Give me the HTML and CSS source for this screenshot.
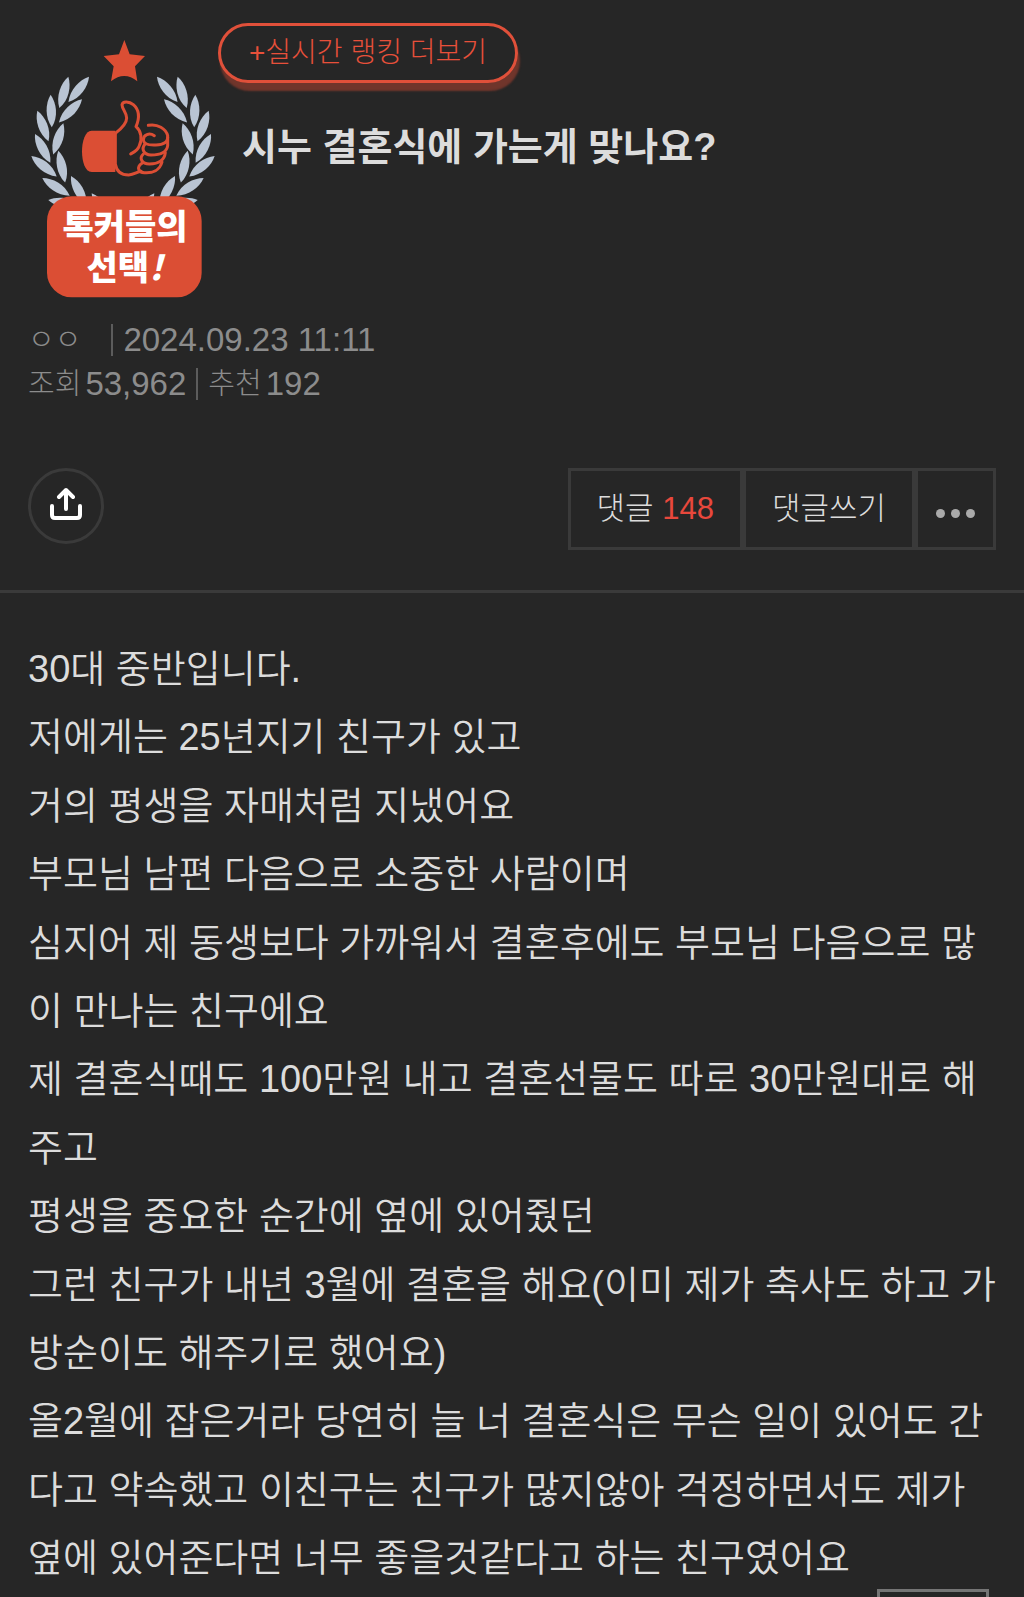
FILE: index.html
```
<!DOCTYPE html>
<html lang="ko">
<head>
  <meta charset="UTF-8">
  <meta name="viewport" content="width=device-width, initial-scale=1">
  <title>시누 결혼식에 가는게 맞나요?</title>
  <link rel="stylesheet" href="styles.css">
</head>
<body>
  <header class="post-head">
    <div class="post-top">
      <svg class="badge" viewBox="84 114 570 786" role="img" aria-labelledby="badge-line1 badge-line2">
        <defs>
          <path id="leaf" d="M0 0C17 26 21 66 0 98C-20 66 -17 26 0 0Z"/>
          <g id="branch">
            <use href="#leaf" transform="translate(205 230) rotate(16)"/>
            <use href="#leaf" transform="translate(267 230) rotate(39)"/>
            <use href="#leaf" transform="translate(152 284) rotate(-2)"/>
            <use href="#leaf" transform="translate(246 298) rotate(45)"/>
            <use href="#leaf" transform="translate(112 332) rotate(-20)"/>
            <use href="#leaf" transform="translate(190 370) rotate(18)"/>
            <use href="#leaf" transform="translate(105 402) rotate(-28)"/>
            <use href="#leaf" transform="translate(175 452) rotate(-12)"/>
            <use href="#leaf" transform="translate(94 468) rotate(-51)"/>
            <use href="#leaf" transform="translate(213 528) rotate(-28)"/>
            <use href="#leaf" transform="translate(127 534) rotate(-57)"/>
            <use href="#leaf" transform="translate(145 600) rotate(-80)"/>
            <use href="#leaf" transform="translate(275 580) rotate(-36)"/>
          </g>
        </defs>
        <g fill="#b9c4d3">
          <use href="#branch"/>
          <use href="#branch" transform="translate(738 0) scale(-1 1)"/>
        </g>
        <path class="badge-red" d="M373 120L389 163L435 168L405 199L412 244Q373 212 333 244L341 199L311 168L357 163Z"/>
        <path class="badge-red" d="M346 392H275C255 392 246 425 246 454C246 485 255 516 275 516H346Z"/>
        <g class="badge-hand" transform="translate(228 282)">
          <path d="M118 118C135 105 152 90 152 72C152 55 138 45 138 32C140 20 160 22 172 32C190 48 192 70 180 98C195 110 200 135 190 155C185 170 172 175 164 180"/>
          <path d="M118 118V210C122 235 140 243 158 243C175 242 182 234 195 232"/>
          <path d="M217 94C245 88 270 105 275 125C277 145 262 153 240 153C220 154 203 152 202 138C202 122 220 115 235 125"/>
          <path d="M207 150C195 165 203 182 225 183C250 183 272 178 275 155L275 130"/>
          <path d="M202 180C188 193 198 210 220 210C245 210 265 200 268 176"/>
          <path d="M198 208C180 220 188 236 205 236C230 238 252 228 258 204"/>
        </g>
        <rect class="badge-red" x="141" y="589" width="464" height="303" rx="74"/>
        <text id="badge-line1" class="badge-text" x="375" y="717">톡커들의</text>
        <text id="badge-line2" class="badge-text" x="374" y="839">선택<tspan font-style="italic">!</tspan></text>
      </svg>
      <div class="post-title-area">
        <a class="ranking-more" href="#">+실시간 랭킹 더보기</a>
        <h1 class="post-title">시누 결혼식에 가는게 맞나요?</h1>
      </div>
    </div>

    <div class="post-info">
      <p class="info-row">
        <span class="writer">ㅇㅇ</span>
        <span class="bar"></span>
        <span class="num">2024.09.23 11:11</span>
      </p>
      <p class="info-row">
        <span>조회</span>
        <span class="num">53,962</span>
        <span class="bar"></span>
        <span>추천</span>
        <span class="num">192</span>
      </p>
    </div>

    <div class="post-tools">
      <button class="share" type="button" aria-label="공유">
        <svg viewBox="0 0 34 34" width="34" height="34">
          <path d="M17 22V3M10 10L17 3L24 10M3 19V28Q3 31 6 31H28Q31 31 31 28V19"/>
        </svg>
      </button>
      <div class="tool-buttons">
        <button class="tool" type="button">댓글 <span class="count">148</span></button>
        <button class="tool" type="button">댓글쓰기</button>
        <button class="tool more" type="button" aria-label="메뉴">
          <span class="dot"></span><span class="dot"></span><span class="dot"></span>
        </button>
      </div>
    </div>
  </header>

  <article class="post-body">
    30대 중반입니다.<br>
    저에게는 25년지기 친구가 있고<br>
    거의 평생을 자매처럼 지냈어요<br>
    부모님 남편 다음으로 소중한 사람이며<br>
    심지어 제 동생보다 가까워서 결혼후에도 부모님 다음으로 많이 만나는 친구에요<br>
    제 결혼식때도 100만원 내고 결혼선물도 따로 30만원대로 해주고<br>
    평생을 중요한 순간에 옆에 있어줬던<br>
    그런 친구가 내년 3월에 결혼을 해요(이미 제가 축사도 하고 가방순이도 해주기로 했어요)<br>
    올2월에 잡은거라 당연히 늘 너 결혼식은 무슨 일이 있어도 간다고 약속했고 이친구는 친구가 많지않아 걱정하면서도 제가 옆에 있어준다면 너무 좋을것같다고 하는 친구였어요
  </article>

  <button class="go-top" type="button" aria-label="맨 위로"></button>
</body>
</html>
```
FILE: styles.css
```
* {
  box-sizing: border-box;
}
body {
  margin: 0;
  background: #262626;
  color: #dcdcdc;
  font-family: "Liberation Sans", "Noto Sans CJK KR", sans-serif;
  font-weight: 300;
}
button {
  padding: 0;
  background: none;
  color: inherit;
  font: inherit;
  cursor: pointer;
}
.post-head {
  padding: 23px 28px 40px;
  border-bottom: 3px solid #3a3a3a;
}
.post-top {
  display: flex;
}
.badge {
  flex: none;
  width: 190px;
  height: 262px;
  margin-top: 15px;
}
.badge-red {
  fill: #db4e34;
}
.badge-hand {
  fill: none;
  stroke: #db4e34;
  stroke-width: 9;
  stroke-linecap: round;
  stroke-linejoin: round;
}
.badge-text {
  fill: #fff;
  font-family: "Noto Sans CJK KR", sans-serif;
  font-size: 102px;
  font-weight: 900;
  text-anchor: middle;
}
.post-title-area {
  display: flex;
  flex-direction: column;
  align-items: flex-start;
}
.ranking-more {
  padding: 0 28px;
  border: 3px solid #e0503a;
  border-radius: 30px;
  box-shadow: 2px 8px 2px #70352b;
  color: #e8503a;
  font-size: 28px;
  line-height: 54px;
  text-decoration: none;
}
.post-title {
  margin: 36px 0 0 24px;
  font-size: 38px;
  font-weight: 700;
  line-height: 56px;
}
.post-info {
  margin-top: 18px;
  color: #8c8c8c;
  font-size: 29px;
}
.info-row {
  display: flex;
  align-items: center;
  gap: 4px;
  margin: 0;
  line-height: 44px;
}
.num {
  font-size: 33px;
}
.writer {
  margin-right: 20px;
}
.bar {
  width: 2px;
  height: 32px;
  margin: 0 6px;
  background: #5c5c5c;
}
.post-tools {
  display: flex;
  justify-content: space-between;
  align-items: flex-start;
  margin-top: 62px;
}
.share {
  display: flex;
  align-items: center;
  justify-content: center;
  width: 76px;
  height: 76px;
  padding-bottom: 4px;
  border: 3px solid #3a3a3a;
  border-radius: 50%;
}
.share path {
  fill: none;
  stroke: #fff;
  stroke-width: 4;
  stroke-linecap: round;
  stroke-linejoin: round;
}
.tool-buttons {
  display: flex;
}
.tool {
  height: 82px;
  padding: 0 26px 8px;
  border: 3px solid #3a3a3a;
  font-size: 31px;
}
.count {
  color: #e8483c;
}
.more {
  display: flex;
  align-items: center;
  gap: 6px;
  padding: 8px 18px 0;
}
.dot {
  width: 9px;
  height: 9px;
  border-radius: 50%;
  background: #aaa;
}
.post-body {
  padding: 42px 24px 0 28px;
  font-size: 38px;
  font-weight: 350;
  line-height: 1.8;
}
.go-top {
  position: fixed;
  right: 35px;
  bottom: -104px;
  width: 112px;
  height: 112px;
  border: 3px solid #757575;
  background: #262626;
}
```
